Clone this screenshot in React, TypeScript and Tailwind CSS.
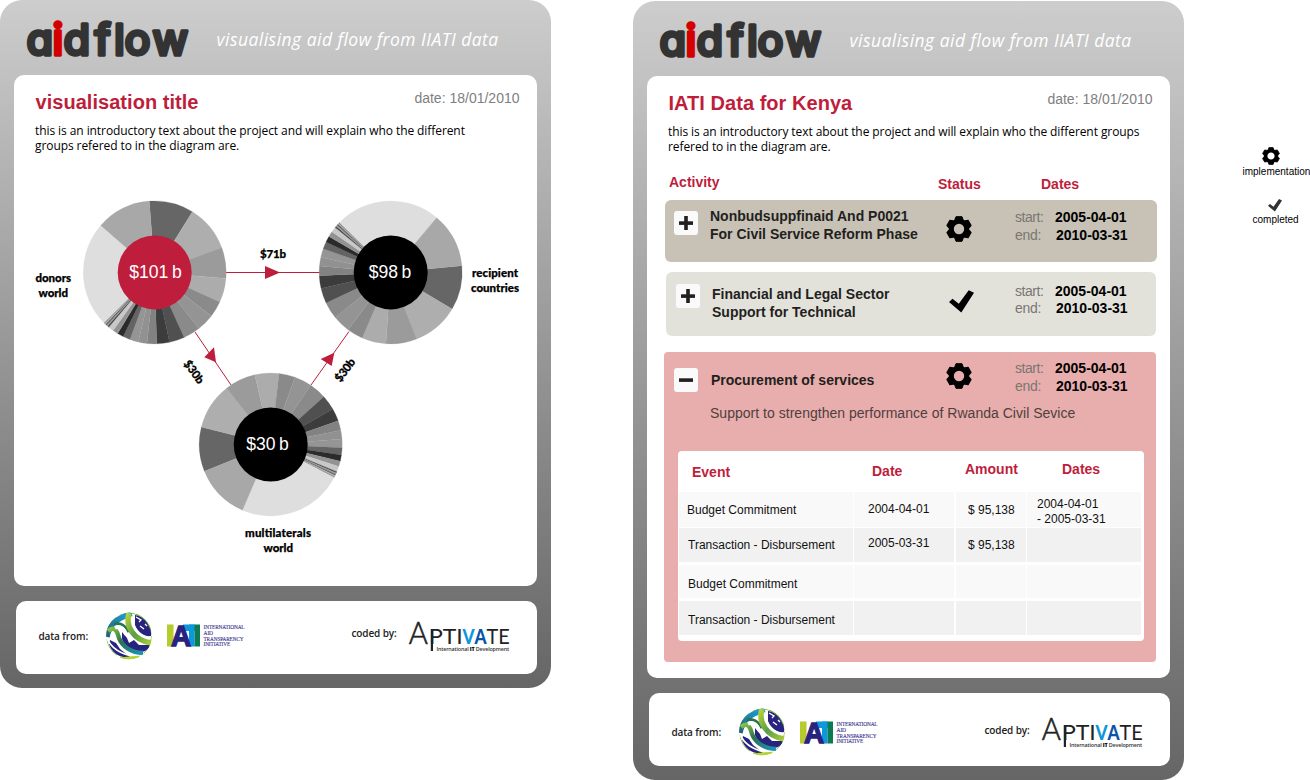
import type { ReactNode } from "react";

const SLICES: [number, number, string][] = [
  [-4.3, 31.8, "#666666"],
  [31.8, 69.6, "#aeaeae"],
  [69.6, 94.8, "#9b9b9b"],
  [94.8, 114.5, "#acacac"],
  [114.5, 127.6, "#8a8a8a"],
  [127.6, 141.8, "#949494"],
  [141.8, 155.7, "#8a8a8a"],
  [155.7, 168, "#505050"],
  [168, 178.4, "#3c3c3c"],
  [178.4, 186.2, "#828282"],
  [186.2, 193.3, "#919191"],
  [193.3, 200.3, "#959595"],
  [200.3, 206.2, "#646464"],
  [206.2, 211.2, "#2b2b2b"],
  [211.2, 215.6, "#939393"],
  [215.6, 220, "#c8c8c8"],
  [220, 221.3, "#4a4a4a"],
  [221.3, 222.4, "#9a9a9a"],
  [222.4, 223.5, "#555555"],
  [223.5, 224.4, "#b5b5b5"],
  [224.4, 225.2, "#777777"],
  [225.2, 311, "#dedede"],
  [311, 355.7, "#a8a8a8"],
];

function slicePath(from: number, to: number, r: number) {
  const rad = (d: number) => (d * Math.PI) / 180;
  const x1 = r * Math.sin(rad(from));
  const y1 = -r * Math.cos(rad(from));
  const x2 = r * Math.sin(rad(to));
  const y2 = -r * Math.cos(rad(to));
  return `M0 0L${x1} ${y1}A${r} ${r} 0 0 1 ${x2} ${y2}Z`;
}

function Donut({ cx, cy, turn, fill, label, labelX, labelWidth }: {
  cx: number; cy: number; turn: number; fill: string; label: string; labelX: number; labelWidth: number;
}) {
  return (
    <g transform={`translate(${cx} ${cy})`}>
      <g transform={`rotate(${turn})`}>
        {SLICES.map(([a, b, color]) => (
          <path key={a} d={slicePath(a, b, 71.5)} fill={color} stroke={color} strokeWidth={0.2} />
        ))}
      </g>
      <circle r={37} fill={fill} />
      <text x={labelX} y={5.5} textLength={labelWidth} lengthAdjust="spacingAndGlyphs" fill="#fff" fontSize={18.5} wordSpacing={-1.5}>
        {label}
      </text>
    </g>
  );
}

function FlowChart() {
  return (
    <svg viewBox="14 165 523 395" width={523} height={395} className="block font-['Liberation_Sans',sans-serif]">
      <g stroke="#be1e3c" strokeWidth={1}>
        <path d="M226 272.5H320" />
        <path d="M195 332L231 385" />
        <path d="M311 385L349 331.5" />
      </g>
      <g fill="#be1e3c">
        <path d="M265 266L280 272.5L265 279Z" />
        <path d="M214 347.3L204.3 357.3L216 362.3Z" />
        <path d="M334.3 352.7L320.7 359L331.7 366Z" />
      </g>
      <Donut cx={154.7} cy={272.4} turn={0} fill="#be1e3c" label="$101 b" labelX={-25.5} labelWidth={52.5} />
      <Donut cx={390.7} cy={272.4} turn={89} fill="#000" label="$98 b" labelX={-22} labelWidth={42.5} />
      <Donut cx={270.7} cy={444.5} turn={252.3} fill="#000" label="$30 b" labelX={-24.5} labelWidth={42.5} />
      <g className="font-['Lato',sans-serif]" fontWeight={900} fontSize={11.5} fill="#000" stroke="#000" strokeWidth={0.25}>
        <text x={35.5} y={282} textLength={35.5}>donors</text>
        <text x={38.5} y={297} textLength={29.5}>world</text>
        <text x={472} y={277} textLength={46}>recipient</text>
        <text x={471} y={292} textLength={48}>countries</text>
        <text x={245} y={537} textLength={66}>multilaterals</text>
        <text x={263.5} y={552} textLength={29.5}>world</text>
        <text x={260} y={258} textLength={26}>$71b</text>
        <text x={-13} y={4} textLength={26} transform="translate(194 372) rotate(54)">$30b</text>
        <text x={-13} y={4} textLength={26} transform="translate(345 370) rotate(-54)">$30b</text>
      </g>
    </svg>
  );
}

function AidflowLogo() {
  return (
    <svg width={172} height={64} viewBox="22 6 172 64" className="mt-1.5 ml-[22px] shrink-0">
      <text
        x="26.5 52.6 63.5 94.5 114 124.5 152.6"
        y={55}
        fontSize={43}
        fontWeight={500}
        fill="#333"
        stroke="#333"
        strokeWidth={3.4}
        strokeLinejoin="round"
        className="font-['Inter',sans-serif] [font-feature-settings:'cv11']"
      >
        a<tspan fill="#d40000" stroke="#d40000">i</tspan>dflow
      </text>
    </svg>
  );
}

function Globe() {
  return (
    <svg width={48} height={48} viewBox="0 0 48 48" className="shrink-0">
      <defs>
        <clipPath id="globe">
          <ellipse cx={24} cy={24} rx={23} ry={23.5} />
        </clipPath>
        <linearGradient id="band" x1="0" y1="0" x2="1" y2="1">
          <stop offset="0" stopColor="#b4d334" />
          <stop offset="0.5" stopColor="#5a9c4a" />
          <stop offset="1" stopColor="#a9cf38" />
        </linearGradient>
        <linearGradient id="sweep" x1="0" y1="0" x2="1" y2="1">
          <stop offset="0" stopColor="#8cc63f" />
          <stop offset="0.45" stopColor="#2a7350" />
          <stop offset="1" stopColor="#1c93b8" />
        </linearGradient>
        <linearGradient id="sea" x1="0" y1="1" x2="1" y2="0">
          <stop offset="0" stopColor="#23627c" />
          <stop offset="1" stopColor="#1aa3e0" />
        </linearGradient>
      </defs>
      <g clipPath="url(#globe)" fill="none">
        <ellipse cx={24} cy={24} rx={22.3} ry={22.9} stroke="#8dc152" strokeWidth={1} strokeDasharray="20 4" />
        <path d="M30 3C40 4 47 14 46 24C40 25 33 21 30 13Z" fill="#27237f" />
        <path d="M31 5L36 8L34 10M40 12L42 14M35 14L39 17" stroke="#fff" strokeWidth={1.3} />
        <path d="M5 28L11 31L15 37L20 41L25 45C15 47 6 40 4 32Z" fill="#27237f" />
        <path d="M17 20L22 26L24 31L29 28L34 33L45 33C43 40 36 41 30 39C24 37 18 31 17 27Z" fill="#27237f" />
        <path d="M2 25C4 14 10 6 27 2" stroke="url(#sea)" strokeWidth={5.5} />
        <path d="M9 12C15 10 21 14 24 20" stroke="#2a7350" strokeWidth={3} />
        <path d="M24 1C20 14 28 28 46 31" stroke="url(#band)" strokeWidth={5.5} />
        <path d="M3 19C9 14 12 18 14 26C17 34 26 41 38 41" stroke="url(#sweep)" strokeWidth={4.4} />
        <path d="M10 16C17 13 20 18 21 23" stroke="#fff" strokeWidth={3.4} />
        <path d="M2 26C5 34 14 42 31 45" stroke="#fff" strokeWidth={1.8} />
        <path d="M27 4C27 15 34 24 46 26" stroke="#fff" strokeWidth={1.3} />
        <path d="M15 46C22 47 27 45 34 45" stroke="#b4d334" strokeWidth={2.6} />
        <path d="M31 2C38 4 43 9 46 17" stroke="#7db84c" strokeWidth={1.8} />
      </g>
    </svg>
  );
}

function IatiLogo() {
  return (
    <svg width={80} height={30} viewBox="0 -2 80 30" className="shrink-0 overflow-visible">
      <rect x={0} y={1.5} width={6.5} height={22} fill="#b4cc2c" />
      <rect x={16} y={1.5} width={12} height={6.5} fill="#0f97dc" />
      <rect x={22} y={1.5} width={5.5} height={22} fill="#0f97dc" />
      <rect x={27.5} y={1.5} width={5.5} height={22} fill="#0c7a52" />
      <text x={4} y={23.2} fontSize={30} fontWeight={700} textLength={20} lengthAdjust="spacingAndGlyphs" fill="#27237f" stroke="#27237f" strokeWidth={1.4} className="font-['Liberation_Sans',sans-serif]">
        A
      </text>
      <g fontSize={5.6} fontWeight={400} fill="#3a3690" stroke="#3a3690" strokeWidth={0.12} className="font-['Liberation_Serif',serif]">
        <text x={36.5} y={5.6} textLength={41} lengthAdjust="spacingAndGlyphs">INTERNATIONAL</text>
        <text x={36.5} y={11.6} textLength={9.5} lengthAdjust="spacingAndGlyphs">AID</text>
        <text x={36.5} y={17.6} textLength={40} lengthAdjust="spacingAndGlyphs">TRANSPARENCY</text>
        <text x={36.5} y={23.4} textLength={26.5} lengthAdjust="spacingAndGlyphs">INITIATIVE</text>
      </g>
    </svg>
  );
}

function AptivateLogo() {
  return (
    <svg width={104} height={40} viewBox="0 -4 104 40" className="shrink-0 overflow-visible">
      <g fill="#222" className="font-['Lato',sans-serif]">
        <text x={0.8} y={24} fontSize={31} fontWeight={300} textLength={19} lengthAdjust="spacingAndGlyphs" stroke="#222" strokeWidth={0.6}>A</text>
        <text x={21} y={24} fontSize={21.5} fontWeight={400} textLength={33.5} lengthAdjust="spacingAndGlyphs">PTI</text>
        <text x={54.5} y={24} fontSize={21.5} fontWeight={900} textLength={12} lengthAdjust="spacingAndGlyphs" fill="#0f97dc">V</text>
        <text x={66.5} y={24} fontSize={21.5} fontWeight={900} textLength={12} lengthAdjust="spacingAndGlyphs" fill="#0b55a8">A</text>
        <text x={78.5} y={24} fontSize={21.5} fontWeight={400} textLength={23} lengthAdjust="spacingAndGlyphs">TE</text>
      </g>
      <rect x={22.8} y={9} width={2.2} height={22} fill="#222" />
      <text x={28.5} y={30.8} fontSize={5.4} fill="#333" textLength={72.5} className="font-['Open_Sans',sans-serif]">
        International <tspan fontWeight={800} fill="#000">IT</tspan> Development
      </text>
    </svg>
  );
}

function Gear({ size }: { size: number }) {
  return (
    <svg width={size} height={size} viewBox="-13 -13 26 26" className="block shrink-0">
      {[0, 60, 120, 180, 240, 300].map((a) => (
        <path key={a} transform={`rotate(${a})`} d="M-4.6 -8L-3 -12.3L3 -12.3L4.6 -8Z" stroke="#000" strokeWidth={1} strokeLinejoin="round" />
      ))}
      <circle r={7.6} fill="none" stroke="#000" strokeWidth={4.8} />
    </svg>
  );
}

function Check({ size, color }: { size: number; color: string }) {
  return (
    <svg width={size} height={size * 0.9} viewBox="0 0 25 22.5" className="block shrink-0">
      <path d="M0 12L3.5 8.8L9.8 13.7L19.7 0.2L25 2.8L12.3 22.5Z" fill={color} />
    </svg>
  );
}

function Toggle({ open, className }: { open?: boolean; className: string }) {
  return (
    <button className={`flex size-6 shrink-0 items-center justify-center rounded-[3px] bg-[#fafafa] ${className}`}>
      <svg width={14} height={14} viewBox="0 0 14 14" fill="#231f20">
        <rect y={5.3} width={14} height={3.6} />
        {!open && <rect x={5.2} width={3.6} height={14} />}
      </svg>
    </button>
  );
}

function DateRange({ className }: { className: string }) {
  return (
    <div className={`w-[115px] shrink-0 text-[14px] leading-[17.5px] whitespace-nowrap ${className}`}>
      <div className="flex">
        <span className="w-10 tracking-[-0.45px] text-[#7a7672]">start:</span>
        <span className="font-bold">2005-04-01</span>
      </div>
      <div className="flex">
        <span className="w-[41px] tracking-[-0.3px] text-[#7a7672]">end:</span>
        <span className="font-bold">2010-03-31</span>
      </div>
    </div>
  );
}

function Card({ className, footerClass, children }: { className: string; footerClass: string; children: ReactNode }) {
  return (
    <section className={`flex w-[551px] shrink-0 flex-col rounded-[22px] bg-linear-to-b from-[#cdcdcd] to-[#666666] ${className}`}>
      <header className="flex h-[75px] shrink-0 items-start">
        <AidflowLogo />
        <p className="mt-[27px] ml-[22.5px] font-['Open_Sans',sans-serif] text-[17.5px] leading-6 tracking-[0.47px] whitespace-nowrap text-white italic">
          visualising aid flow from IIATI data
        </p>
      </header>
      {children}
      <footer className={`mt-auto mr-3.5 mb-3.5 ml-4 flex h-[73px] shrink-0 items-start rounded-[10px] bg-white font-['Open_Sans',sans-serif] text-[10px] leading-[14px] font-semibold tracking-[-0.12px] whitespace-nowrap text-[#222] ${footerClass}`}>
        <span className="mt-[27.5px] ml-[22.5px] w-[66.5px]">data from:</span>
        <span className="mt-[10.5px]"><Globe /></span>
        <span className="mt-[20px] ml-[14px]"><IatiLogo /></span>
        <span className="mt-[25px] ml-[104.5px] w-[56px]">coded by:</span>
        <span className="mt-[14.5px]"><AptivateLogo /></span>
      </footer>
    </section>
  );
}

function TitleBar({ title }: { title: string }) {
  return (
    <div className="flex items-start justify-between pt-3.5 pr-[17.5px] pl-[21.5px] whitespace-nowrap">
      <h1 className="mt-[1px] text-[20px] leading-6 font-bold tracking-[0.04px] text-[#be1e3c]">{title}</h1>
      <span className="text-[14px] leading-[18px] text-[#808080]">date: 18/01/2010</span>
    </div>
  );
}

const INTRO = "ml-[21px] mt-[9px] font-['Open_Sans',sans-serif] text-[12px] leading-[15px] tracking-[-0.08px] whitespace-nowrap text-black";
const RED = "font-bold text-[#be1e3c] text-[14px] leading-[18px]";

function EventRow({ event, date, amount, dates, shade, pads }: {
  event: string; date?: string; amount?: string; dates?: string[]; shade: string; pads: string[];
}) {
  return (
    <div className="grid h-[33.5px] grid-cols-[174px_100px_70px_114px] gap-x-[1.5px] text-[12px] leading-[15px] whitespace-nowrap text-[#111]">
      <div className={`${shade} ${pads[0]}`}>{event}</div>
      <div className={`${shade} pl-[14px] ${pads[1]}`}>{date}</div>
      <div className={`${shade} pl-[12.5px] ${pads[2]}`}>{amount}</div>
      <div className={`${shade} pt-[5.5px] pl-[10px]`}>{dates?.map((d) => <div key={d}>{d}</div>)}</div>
    </div>
  );
}

export default function App() {
  return (
    <main className="flex h-[780px] w-[1310px] items-start overflow-hidden bg-white font-['Liberation_Sans',sans-serif] text-black">
      <Card className="h-[688px]" footerClass="">
        <div className="ml-3.5 h-[511px] w-[523px] rounded-[10px] bg-white">
          <TitleBar title="visualisation title" />
          <p className={INTRO}>
            this is an introductory text about the project and will explain who the different
            <br />
            groups refered to in the diagram are.
          </p>
          <div className="mt-3"><FlowChart /></div>
        </div>
      </Card>

      <Card className="mt-px ml-[82px] h-[779px]" footerClass="pt-[4.5px]">
        <div className="ml-3.5 h-[602px] w-[523px] rounded-[10px] bg-white">
          <TitleBar title="IATI Data for Kenya" />
          <p className={INTRO}>
            this is an introductory text about the project and will explain who the different groups
            <br />
            refered to in the diagram are.
          </p>

          <div className={`mt-[19px] ml-[22px] flex items-start ${RED}`}>
            <span className="w-[269px]">Activity</span>
            <span className="mt-[1.5px] w-[103px]">Status</span>
            <span className="mt-[1.5px]">Dates</span>
          </div>

          <div className="mt-[7.5px] ml-[17.5px] flex h-[62px] w-[492.5px] items-start rounded-md bg-[#c7c2b5]">
            <Toggle className="mt-[10.5px] ml-[9.5px]" />
            <div className="mt-2 ml-3 w-[236px] text-[14px] leading-[17.5px] font-bold whitespace-nowrap text-[#231f20]">
              Nonbudsuppfinaid And P0021
              <br />
              For Civil Service Reform Phase
            </div>
            <div className="mt-[15.5px] w-[69px]"><Gear size={26} /></div>
            <DateRange className="mt-[9px]" />
          </div>

          <div className="mt-[10px] ml-[18.5px] flex h-16 w-[490.5px] items-start rounded-md bg-[#e2e2db]">
            <Toggle className="mt-3 ml-[10.5px]" />
            <div className="mt-[14px] ml-3 w-[237px] text-[14px] leading-[17.5px] font-bold whitespace-nowrap text-[#231f20]">
              Financial and Legal Sector
              <br />
              Support for Technical
            </div>
            <div className="mt-[18px] w-[66px]"><Check size={25} color="#000" /></div>
            <DateRange className="mt-[10.5px]" />
          </div>

          <div className="mt-4 ml-[17px] h-[310px] w-[492px] rounded bg-[#e8aead]">
            <div className="flex h-[52px] items-start">
              <Toggle open className="mt-[15.5px] ml-[10px]" />
              <div className="mt-[18.5px] ml-[13px] w-[235px] text-[14px] leading-[18px] font-bold whitespace-nowrap text-[#231f20]">
                Procurement of services
              </div>
              <div className="mt-[11px] w-[69px]"><Gear size={26} /></div>
              <DateRange className="mt-[8px]" />
            </div>
            <p className="ml-[46px] text-[14px] leading-[18px] tracking-[0.02px] whitespace-nowrap text-[#4f3f3e]">
              Support to strengthen performance of Rwanda Civil Sevice
            </p>
            <div className="mt-[29px] ml-[13.5px] h-[190px] w-[466.5px] rounded bg-white pl-[1px]">
              <div className={`flex h-[40.5px] items-start pl-[13.5px] ${RED}`}>
                <span className="mt-[11.5px] w-[180px]">Event</span>
                <span className="mt-[10.5px] w-[93px]">Date</span>
                <span className="mt-[8.5px] w-[97px]">Amount</span>
                <span className="mt-[9px]">Dates</span>
              </div>
              <div className="flex flex-col gap-[3px]">
                <EventRow event="Budget Commitment" date="2004-04-01" amount="$ 95,138" dates={["2004-04-01", "- 2005-03-31"]} shade="bg-[#f9f9f9]" pads={["pl-[8.5px] pt-[11px]", "pt-[10.5px]", "pt-[11px]"]} />
                <EventRow event="Transaction - Disbursement" date="2005-03-31" amount="$ 95,138" shade="bg-[#f1f1f1]" pads={["pl-[9.5px] pt-[9.5px]", "pt-[7.5px]", "pt-[9.5px]"]} />
                <EventRow event="Budget Commitment" shade="bg-[#f9f9f9]" pads={["pl-[9.5px] pt-[12px]", "", ""]} />
                <EventRow event="Transaction - Disbursement" shade="bg-[#f1f1f1]" pads={["pl-[9.5px] pt-[11.5px]", "", ""]} />
              </div>
            </div>
          </div>
        </div>
      </Card>

      <aside className="mt-[147px] ml-[58.5px] flex w-[67.5px] shrink-0 flex-col items-start text-[10px] leading-3 whitespace-nowrap">
        <div className="ml-[19px]"><Gear size={18} /></div>
        <span className="mt-px">implementation</span>
        <div className="mt-[21px] ml-[25.5px]"><Check size={14} color="#333" /></div>
        <span className="mt-[2px] ml-[10px]">completed</span>
      </aside>
    </main>
  );
}
